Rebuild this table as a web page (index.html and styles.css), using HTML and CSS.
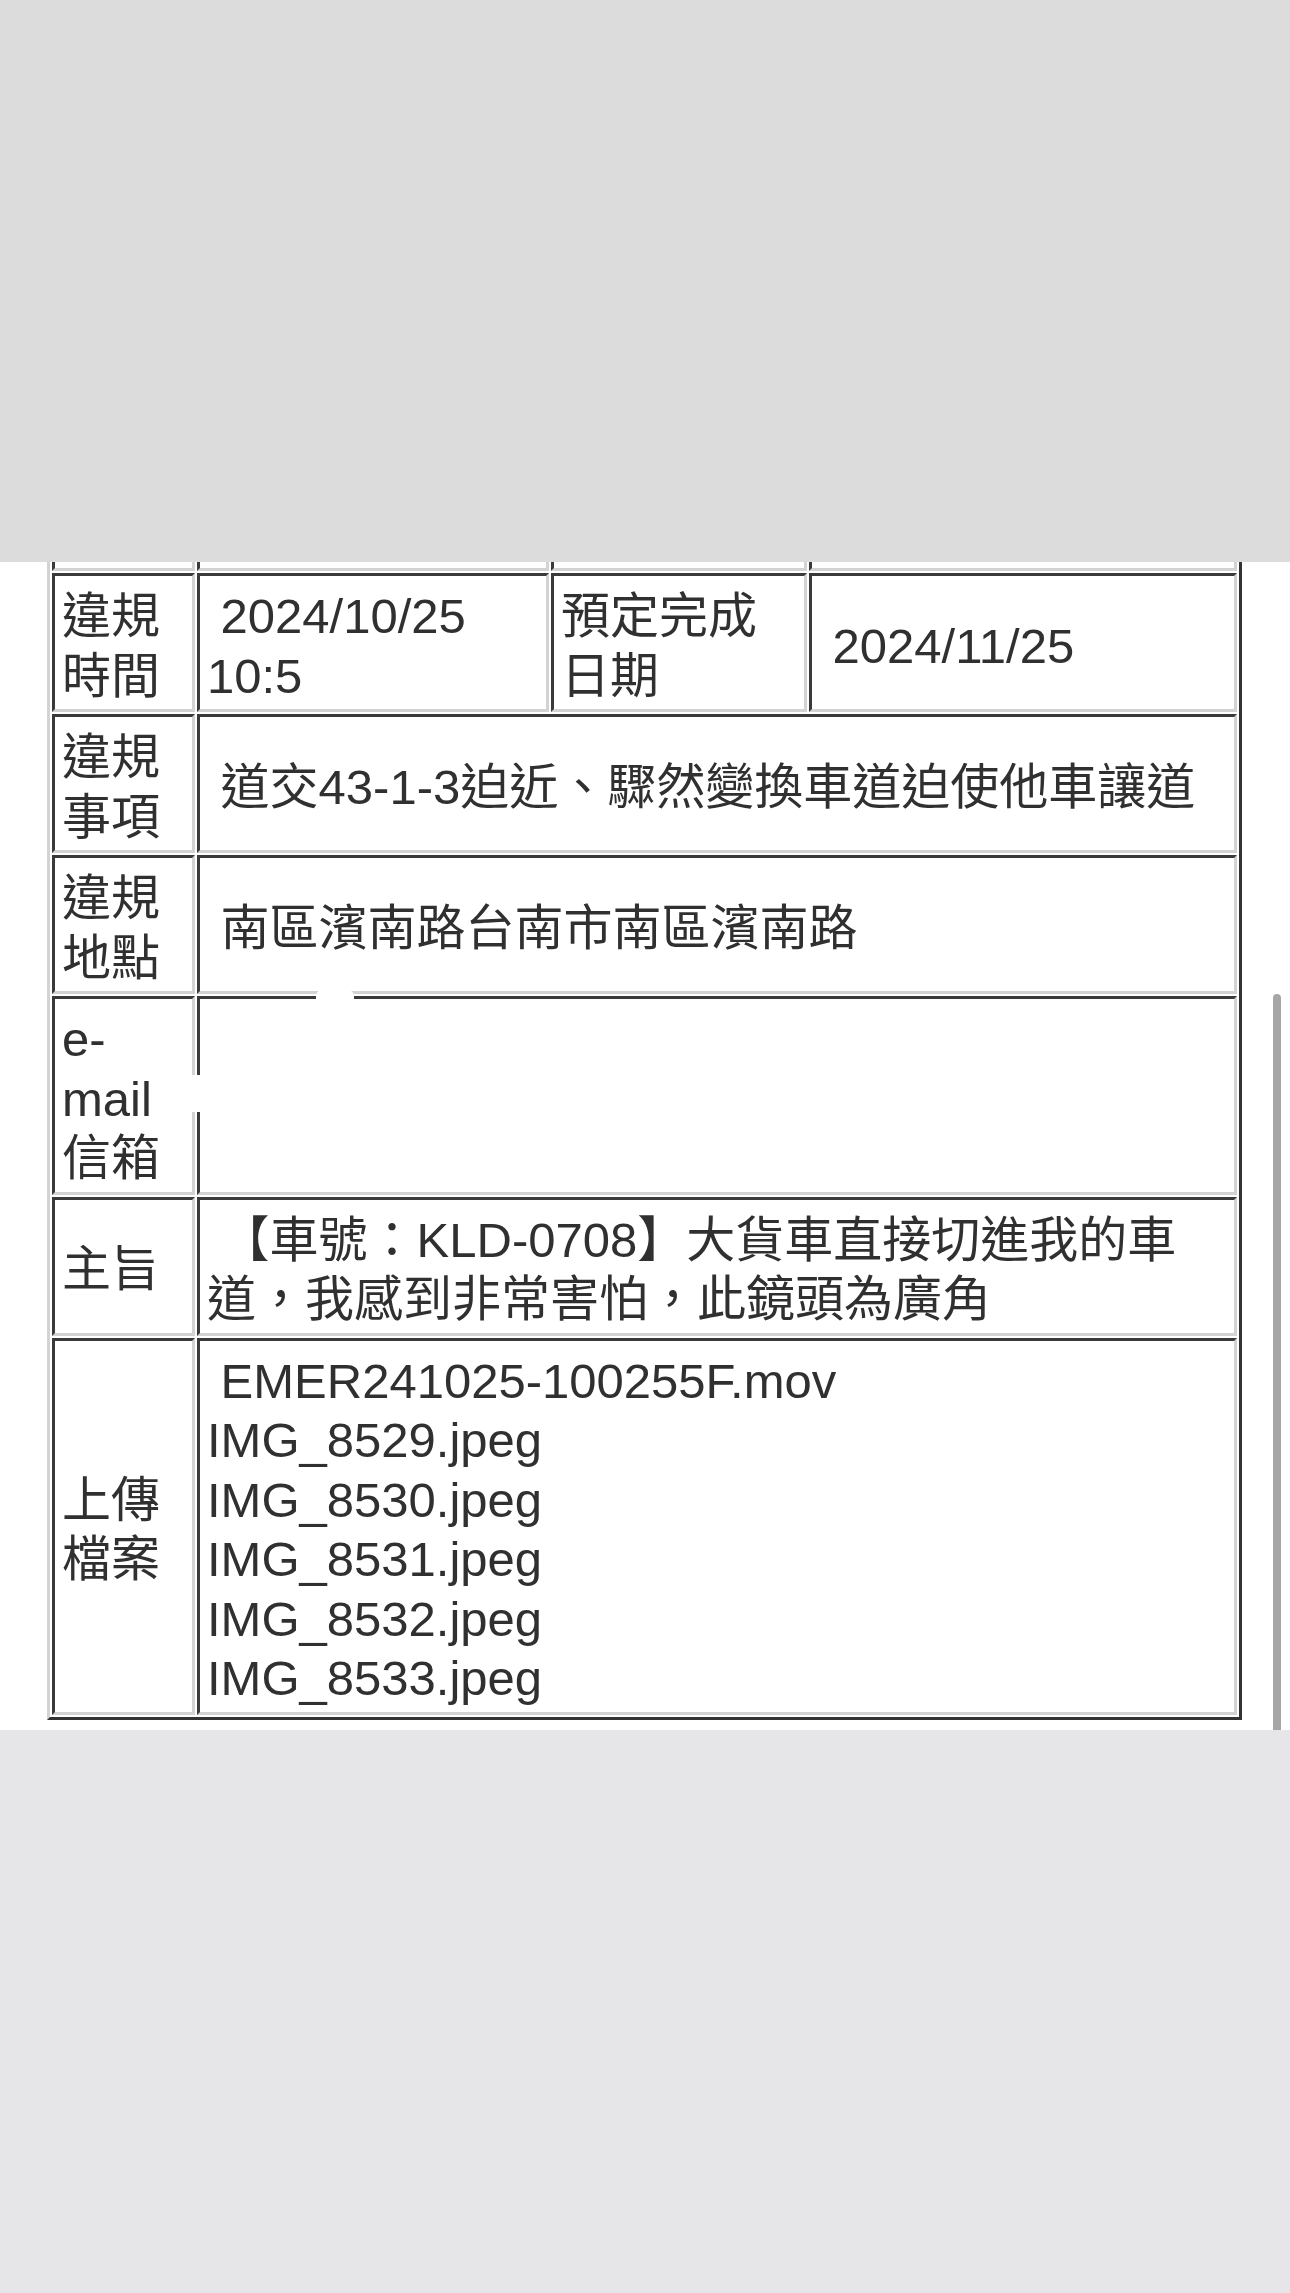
FILE: index.html
```html
<!DOCTYPE html>
<html lang="zh-Hant">
<head>
<meta charset="utf-8">
<title>違規檢舉資料</title>
<link rel="stylesheet" href="styles.css">
</head>
<body>
<div class="shade-top"></div>
<main class="sheet">
  <table class="report">
    <tr class="stub">
      <td class="w-label"><div class="stub-fill"></div></td>
      <td class="w-value"></td>
      <td class="w-label2"></td>
      <td class="w-date"></td>
    </tr>
    <tr>
      <td class="label">違規<br>時間</td>
      <td class="value">&nbsp;2024/10/25 10:5</td>
      <td class="label">預定完成<br>日期</td>
      <td class="value">&nbsp;2024/11/25</td>
    </tr>
    <tr>
      <td class="label">違規<br>事項</td>
      <td class="value" colspan="3">&nbsp;道交43-1-3迫近、驟然變換車道迫使他車讓道</td>
    </tr>
    <tr>
      <td class="label">違規<br>地點</td>
      <td class="value" colspan="3">&nbsp;南區濱南路台南市南區濱南路</td>
    </tr>
    <tr>
      <td class="label">e-<br>mail<br>信箱</td>
      <td class="value" colspan="3"></td>
    </tr>
    <tr>
      <td class="label">主旨</td>
      <td class="value" colspan="3">&nbsp;【車號：KLD-0708】大貨車直接切進我的車<br>道，我感到非常害怕，此鏡頭為廣角</td>
    </tr>
    <tr>
      <td class="label">上傳<br>檔案</td>
      <td class="value" colspan="3">&nbsp;EMER241025-100255F.mov<br>IMG_8529.jpeg<br>IMG_8530.jpeg<br>IMG_8531.jpeg<br>IMG_8532.jpeg<br>IMG_8533.jpeg</td>
    </tr>
  </table>
  <div class="redact redact-top"></div>
  <div class="redact redact-side"></div>
  <div class="scrollbar"></div>
</main>
<div class="shade-bottom"></div>
</body>
</html>
```

FILE: styles.css
```css
html, body {
  margin: 0;
  padding: 0;
}

body {
  width: 1290px;
  background: #ffffff;
  font-family: "Liberation Sans", "Noto Sans CJK TC", sans-serif;
  color: #303030;
}

.shade-top {
  height: 562px;
  background: #dcdcdc;
}

.shade-bottom {
  height: 563px;
  background: #e6e6e8;
}

.sheet {
  position: relative;
  height: 1168px;
  overflow: hidden;
  background: #ffffff;
}

.report {
  box-sizing: border-box;
  width: 1195px;
  margin: -40px 0 0 47px;
  table-layout: fixed;
  border-collapse: separate;
  border-spacing: 2px;
  border-style: solid;
  border-width: 3px;
  border-color: #d3d3d3 #333333 #333333 #d3d3d3;
  font-size: 49px;
  line-height: 59.5px;
}

.report td {
  box-sizing: border-box;
  padding: 11px 7px 3px;
  border-style: solid;
  border-width: 3px;
  border-color: #3a3a3a #d3d3d3 #d3d3d3 #3a3a3a;
  vertical-align: middle;
  text-align: left;
  font-weight: normal;
}

.report .stub td {
  padding: 0;
}

.stub-fill {
  height: 38px;
}

.w-label { width: 143px; }
.w-value { width: 352px; }
.w-label2 { width: 256px; }
.w-date { width: 428px; }

.redact {
  position: absolute;
  background: #ffffff;
}

.redact-top {
  left: 316px;
  top: 428px;
  width: 38px;
  height: 11px;
  border-radius: 6px 6px 2px 2px;
}

.redact-side {
  left: 192px;
  top: 513px;
  width: 16px;
  height: 37px;
}

.scrollbar {
  position: absolute;
  left: 1273px;
  top: 432px;
  width: 8px;
  height: 740px;
  background: #a6a6a6;
  border-radius: 4px 4px 0 0;
}
```
